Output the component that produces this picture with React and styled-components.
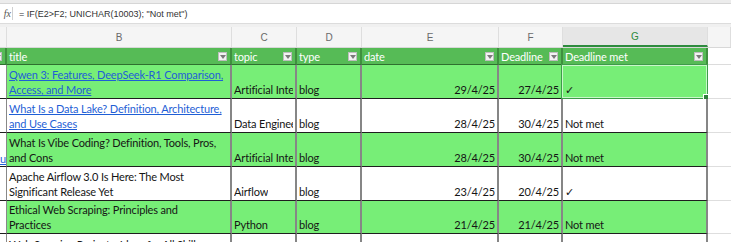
import React from 'react';
import styled, { createGlobalStyle } from 'styled-components';

const COLS = '7px 225px 65px 65px 137px 64px 145px 1fr';

const GlobalStyle = createGlobalStyle`
  html, body {
    margin: 0;
    padding: 0;
    background: #ffffff;
  }
  body {
    font-family: Lato, "Open Sans", sans-serif;
    overflow: hidden;
  }
`;

const Sheet = styled.div`
  width: 731px;
  height: 242px;
  overflow: hidden;
  background: #fff;
`;

const TopStrip = styled.div`
  height: 3px;
  background: #ececec;
  border-bottom: 1px solid #d6d6d6;
`;

const FormulaBar = styled.div`
  height: 19px;
  display: flex;
  align-items: center;
  background: #fff;
  border-bottom: 1px solid #dcdcdc;
`;

const Fx = styled.span`
  width: 11px;
  font-family: "Liberation Serif", serif;
  font-style: italic;
  font-size: 10px;
  color: #555;
  text-align: right;
  padding-right: 1px;
  border-right: 1px solid #d0d0d0;
  line-height: 13px;
`;

const Formula = styled.span`
  padding-left: 6px;
  font-family: "Liberation Sans", Arial, sans-serif;
  font-size: 9px;
  color: #333;
`;

const Gap = styled.div`
  height: 3px;
  background: #f0f0f0;
`;

const LetterRow = styled.div`
  display: grid;
  grid-template-columns: ${COLS};
  height: 20px;
  background: #f5f5f5;
  border-bottom: 1px solid #d8d8d8;
`;

const Letter = styled.div`
  display: flex;
  align-items: center;
  justify-content: center;
  font-family: "Liberation Sans", Arial, sans-serif;
  font-size: 10px;
  color: ${p => (p.$active ? '#2e8b3e' : '#6a6a6a')};
  background: ${p => (p.$active ? '#e6e6e6' : 'transparent')};
  border-right: 1px solid #dedede;
  border-bottom: ${p => (p.$active ? '2px solid #2e8b3e' : 'none')};
`;

const Row = styled.div`
  display: grid;
  grid-template-columns: ${COLS};
  height: ${p => p.$h}px;
  font-size: 11px;
  letter-spacing: -0.15px;
`;

const HeadCell = styled.div`
  position: relative;
  display: flex;
  align-items: center;
  padding-left: 2px;
  background: ${p => (p.$blank ? '#fff' : '#56bb56')};
  color: #fff;
  border-right: ${p => (p.$blank ? 'none' : '2px solid #3f8f3f')};
  border-bottom: 1px solid ${p => (p.$blank ? '#dcdcdc' : '#2f6f2f')};
  overflow: hidden;
  white-space: nowrap;
`;

const Drop = styled.span`
  position: absolute;
  right: 3px;
  top: 4px;
  width: 9px;
  height: 9px;
  background: #f2f2f2;
  border: 1px solid #bdbdbd;
  box-sizing: border-box;
  &::after {
    content: '';
    position: absolute;
    left: 1px;
    top: 2px;
    border-left: 3px solid transparent;
    border-right: 3px solid transparent;
    border-top: 4px solid #7a7a7a;
  }
`;

const Cell = styled.div`
  position: relative;
  display: flex;
  flex-direction: column;
  justify-content: flex-end;
  align-items: ${p => (p.$right ? 'flex-end' : 'flex-start')};
  padding: 0 2px 1px 2px;
  background: ${p => (p.$green ? '#77ee77' : '#fff')};
  color: #151515;
  line-height: 15px;
  border-right: ${p => (p.$blank ? 'none' : '2px solid #868686')};
  border-bottom: 1px solid ${p => (p.$blank ? '#dedede' : '#1e1e1e')};
  white-space: nowrap;
  min-width: 0;
`;

const Clip = styled.span`
  display: block;
  max-width: 100%;
  overflow: hidden;
  text-overflow: clip;
`;

const EdgeCell = styled(Cell)`
  background: #fff;
  border-right: 1px solid #888;
  padding: 0;
  align-items: flex-end;
  overflow: hidden;
`;

const Line = styled.span`
  display: block;
  color: ${p => (p.$link ? '#1f5fd6' : 'inherit')};
  text-decoration: ${p => (p.$link ? 'underline' : 'none')};
`;

const Selected = styled.div`
  position: absolute;
  inset: -1px -2px -1px -2px;
  border: 1px solid #3e9b4a;
  box-shadow: inset 0 0 0 1px #c9f7c9;
  pointer-events: none;
  &::after {
    content: '';
    position: absolute;
    right: -3px;
    bottom: -3px;
    width: 5px;
    height: 5px;
    background: #2f7f3b;
    border: 1px solid #fff;
  }
`;

const rows = [
  {
    title: ['Qwen 3: Features, DeepSeek-R1 Comparison,', 'Access, and More'],
    link: true,
    topic: 'Artificial Intelligence',
    date: '29/4/25',
    deadline: '27/4/25',
    met: '\u2713',
    green: true,
    selected: true,
  },
  {
    title: ['What Is a Data Lake? Definition, Architecture,', 'and Use Cases'],
    link: true,
    topic: 'Data Engineering',
    date: '28/4/25',
    deadline: '30/4/25',
    met: 'Not met',
  },
  {
    title: ['What Is Vibe Coding? Definition, Tools, Pros,', 'and Cons'],
    topic: 'Artificial Intelligence',
    date: '28/4/25',
    deadline: '30/4/25',
    met: 'Not met',
    green: true,
    edge: 'u',
  },
  {
    title: ['Apache Airflow 3.0 Is Here: The Most', 'Significant Release Yet'],
    topic: 'Airflow',
    date: '23/4/25',
    deadline: '20/4/25',
    met: '\u2713',
  },
  {
    title: ['Ethical Web Scraping: Principles and', 'Practices'],
    topic: 'Python',
    date: '21/4/25',
    deadline: '21/4/25',
    met: 'Not met',
    green: true,
    h: 33,
  },
];

const letters = ['', 'B', 'C', 'D', 'E', 'F', 'G', ''];
const heads = ['', 'title', 'topic', 'type', 'date', 'Deadline', 'Deadline met'];

export default function App() {
  return (
    <Sheet>
      <GlobalStyle />
      <TopStrip />
      <FormulaBar>
        <Fx>fx</Fx>
        <Formula>= IF(E2&gt;F2; UNICHAR(10003); "Not met")</Formula>
      </FormulaBar>
      <Gap />
      <LetterRow>
        {letters.map((l, i) => (
          <Letter key={i} $active={l === 'G'}>{l}</Letter>
        ))}
      </LetterRow>
      <Row $h={17}>
        {heads.map((h, i) => (
          <HeadCell key={i}>
            {h}
            <Drop />
          </HeadCell>
        ))}
        <HeadCell $blank />
      </Row>
      {rows.map((r, i) => (
        <Row key={i} $h={r.h || 34}>
          <EdgeCell>
            {r.edge && <Line $link>{r.edge}</Line>}
          </EdgeCell>
          <Cell $green={r.green}>
            {r.title.map((t, j) => (
              <Line key={j} $link={r.link}>{t}</Line>
            ))}
          </Cell>
          <Cell $green={r.green}>
            <Clip>{r.topic}</Clip>
          </Cell>
          <Cell $green={r.green}>blog</Cell>
          <Cell $green={r.green} $right>{r.date}</Cell>
          <Cell $green={r.green} $right>{r.deadline}</Cell>
          <Cell $green={r.green}>
            {r.met}
            {r.selected && <Selected />}
          </Cell>
          <Cell $blank />
        </Row>
      ))}
      <Row $h={20}>
        <EdgeCell />
        <Cell>
          <Line>Web Scraping Projects: Ideas for All Skill</Line>
        </Cell>
        <Cell />
        <Cell />
        <Cell />
        <Cell />
        <Cell />
        <Cell $blank />
      </Row>
    </Sheet>
  );
}
